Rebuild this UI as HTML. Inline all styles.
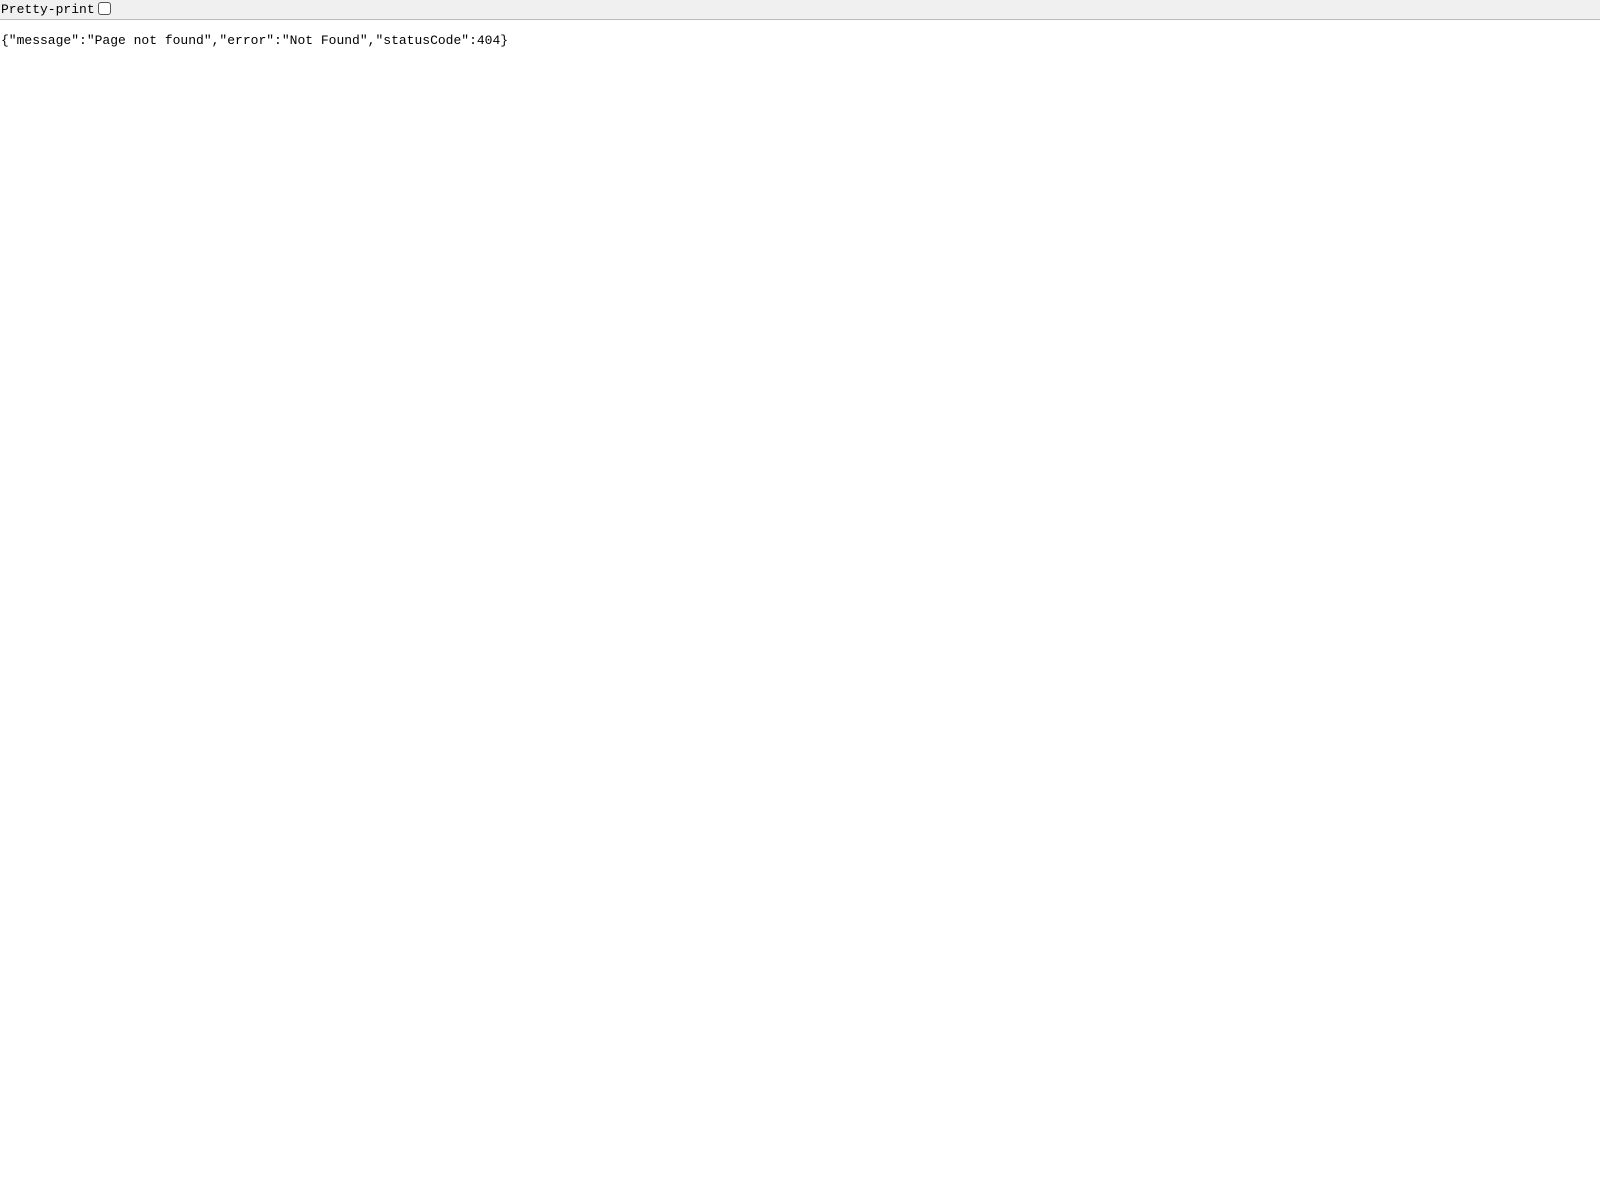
<!DOCTYPE html>
<html><head><style>
body{margin:0;background:#fff;font-family:"Liberation Mono",monospace;font-size:13px;color:#000}
.bar{height:19px;background:#f0f0f0;border-bottom:1px solid #bbb;line-height:19px;padding-left:1px;white-space:nowrap}
.cb{display:inline-block;width:11px;height:11px;border:1px solid #555;border-radius:3px;background:#fff;vertical-align:-2px;margin-left:3px}
pre{margin:0;padding-top:13px;padding-left:1px;font-family:"Liberation Mono",monospace;font-size:13px;line-height:16px}
</style></head><body>
<div class="bar">Pretty-print<span class="cb"></span></div>
<pre>{"message":"Page not found","error":"Not Found","statusCode":404}</pre>
</body></html>
